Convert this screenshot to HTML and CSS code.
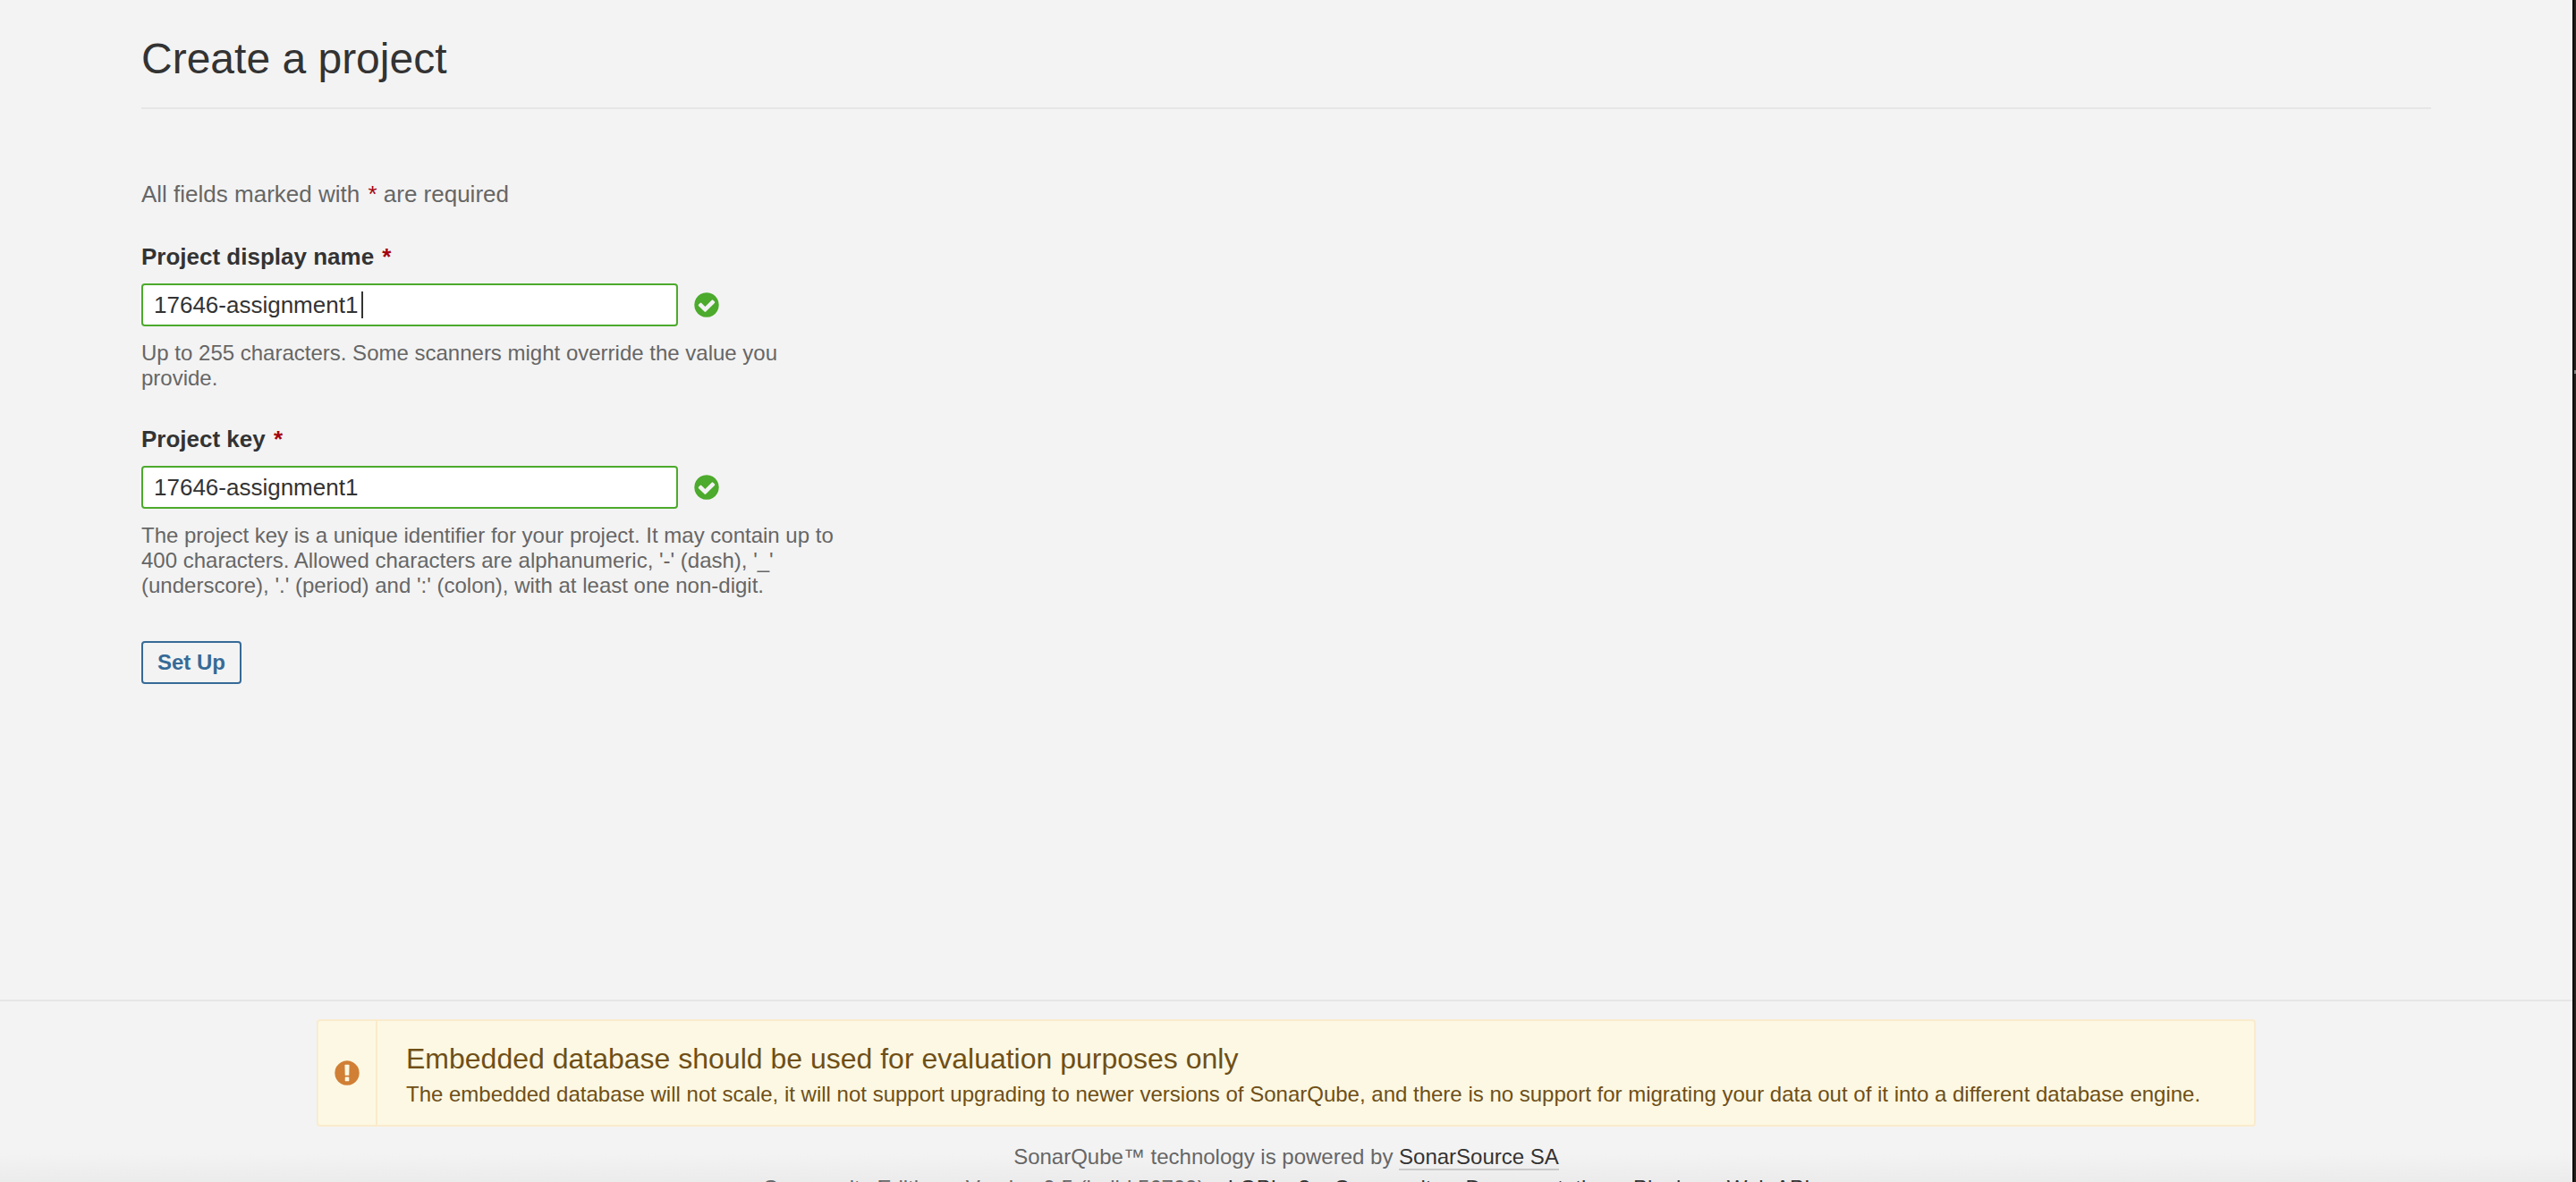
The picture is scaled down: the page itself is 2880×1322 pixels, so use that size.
FILE: index.html
```html
<!DOCTYPE html>
<html lang="en">
<head>
<meta charset="utf-8">
<title>Create a project</title>
<link rel="stylesheet" href="styles.css">
</head>
<body>
<main class="page">
  <header class="page-header">
    <h1 class="page-title">Create a project</h1>
  </header>
  <form class="project-form">
    <p class="form-note">All fields marked with <em class="mandatory">*</em> are required</p>
    <div class="field">
      <label class="field-label" for="project-name">Project display name <em class="mandatory">*</em></label>
      <div class="field-row">
        <span class="input-wrap">
          <input class="text-input" id="project-name" type="text" value="17646-assignment1" required>
          <span class="caret"></span>
        </span>
        <svg class="icon" viewBox="0 0 16 16" aria-hidden="true"><path class="icon-success" d="M12.607 6.554q0-.25-.161-.411l-.813-.804q-.17-.17-.402-.17t-.402.17L7.187 8.973l-2.018-2.018q-.17-.17-.402-.17t-.402.17l-.813.804q-.161.161-.161.411 0 .241.161.402l3.232 3.232q.17.17.402.17.241 0 .411-.17l4.848-4.848q.161-.161.161-.402zM14.857 8q0 1.866-.92 3.442t-2.496 2.496-3.442.92-3.442-.92-2.496-2.496-.92-3.442.92-3.442 2.496-2.496 3.442-.92 3.442.92 2.496 2.496.92 3.442z"/></svg>
      </div>
      <p class="field-help">Up to 255 characters. Some scanners might override the value you provide.</p>
    </div>
    <div class="field">
      <label class="field-label" for="project-key">Project key <em class="mandatory">*</em></label>
      <div class="field-row">
        <span class="input-wrap">
          <input class="text-input" id="project-key" type="text" value="17646-assignment1" required>
        </span>
        <svg class="icon" viewBox="0 0 16 16" aria-hidden="true"><path class="icon-success" d="M12.607 6.554q0-.25-.161-.411l-.813-.804q-.17-.17-.402-.17t-.402.17L7.187 8.973l-2.018-2.018q-.17-.17-.402-.17t-.402.17l-.813.804q-.161.161-.161.411 0 .241.161.402l3.232 3.232q.17.17.402.17.241 0 .411-.17l4.848-4.848q.161-.161.161-.402zM14.857 8q0 1.866-.92 3.442t-2.496 2.496-3.442.92-3.442-.92-2.496-2.496-.92-3.442.92-3.442 2.496-2.496 3.442-.92 3.442.92 2.496 2.496.92 3.442z"/></svg>
      </div>
      <p class="field-help">The project key is a unique identifier for your project. It may contain up to 400 characters. Allowed characters are alphanumeric, '-' (dash), '_' (underscore), '.' (period) and ':' (colon), with at least one non-digit.</p>
    </div>
    <button class="button" type="submit">Set Up</button>
  </form>
</main>
<footer class="page-footer">
  <div class="alert" role="alert">
    <div class="alert-icon">
      <svg class="icon" viewBox="0 0 16 16" aria-hidden="true"><path class="icon-warning" d="M8 1.143q1.866 0 3.442.92t2.496 2.496.92 3.442-.92 3.442-2.496 2.496-3.442.92-3.442-.92-2.496-2.496-.92-3.442.92-3.442 2.496-2.496T8 1.143zm1.143 11.134v-1.696q0-.125-.08-.21t-.196-.085H7.153q-.116 0-.205.089t-.089.205v1.696q0 .116.089.205t.205.089h1.714q.116 0 .196-.085t.08-.21zm-.018-3.072l.161-5.545q0-.107-.089-.161-.089-.071-.214-.071H7.019q-.125 0-.214.071-.089.054-.089.161l.152 5.545q0 .089.089.156t.214.067h1.652q.125 0 .21-.067t.094-.156z"/></svg>
    </div>
    <div class="alert-body">
      <p class="alert-title">Embedded database should be used for evaluation purposes only</p>
      <p class="alert-text">The embedded database will not scale, it will not support upgrading to newer versions of SonarQube, and there is no support for migrating your data out of it into a different database engine.</p>
    </div>
  </div>
  <p class="footer-line">SonarQube™ technology is powered by <a class="footer-link" href="#">SonarSource SA</a></p>
  <ul class="footer-menu">
    <li>Community Edition</li>
    <li>Version 9.5 (build 56709)</li>
    <li><a class="footer-link" href="#">LGPL v3</a></li>
    <li><a class="footer-link" href="#">Community</a></li>
    <li><a class="footer-link" href="#">Documentation</a></li>
    <li><a class="footer-link" href="#">Plugins</a></li>
    <li><a class="footer-link" href="#">Web API</a></li>
  </ul>
</footer>
</body>
</html>
```

FILE: styles.css
```css
* {
  box-sizing: border-box;
}

html {
  background: linear-gradient(#8a8a8a, #8a8a8a) right 414px / 2px 4px no-repeat #26221c;
  scrollbar-width: none;
}

body {
  margin: 0 2px 0 0;
  border-right: 2px solid #000;
  background: #f3f3f3;
  color: #333;
  font-family: "Helvetica Neue", "Liberation Sans", Arial, sans-serif;
  font-size: 26px;
  line-height: 32px;
}

h1,
p,
ul {
  margin: 0;
}

.page {
  min-height: calc(100vh - 204px);
  padding: 42px 158px;
}

.page-header {
  padding-bottom: 30px;
  border-bottom: 2px solid #e6e6e6;
}

.page-title {
  font-size: 48px;
  font-weight: 400;
  line-height: 48px;
}

.project-form {
  max-width: 800px;
  padding-top: 79px;
}

.form-note {
  margin-bottom: 38px;
  color: #666;
}

.mandatory {
  margin-left: 2px;
  color: #a4030f;
  font-style: normal;
}

.field {
  margin-bottom: 38px;
}

.field-label {
  display: block;
  margin-bottom: 14px;
  font-weight: 700;
}

.field-row {
  display: flex;
  align-items: center;
  gap: 16px;
}

.input-wrap {
  position: relative;
  display: flex;
  width: 600px;
}

.text-input {
  width: 100%;
  height: 48px;
  padding: 0 12px;
  border: 2px solid #4caa2c;
  border-radius: 4px;
  outline: none;
  background: #fff;
  color: #333;
  font: inherit;
}

.caret {
  position: absolute;
  top: 9px;
  left: 246px;
  width: 2px;
  height: 30px;
  background: #333;
}

.icon {
  width: 32px;
  height: 32px;
}

.icon-success {
  fill: #4caa2c;
}

.icon-warning {
  fill: #d07f35;
}

.field-help {
  padding-top: 16px;
  color: #666;
  font-size: 24px;
  line-height: 28px;
}

.button {
  height: 48px;
  margin-top: 10px;
  padding: 0 16px;
  border: 2px solid #366a97;
  border-radius: 4px;
  background: transparent;
  color: #366a97;
  font: inherit;
  font-size: 24px;
  font-weight: 700;
}

.page-footer {
  display: flex;
  flex-direction: column;
  align-items: center;
  padding-top: 20px;
  border-top: 2px solid #e6e6e6;
  background: linear-gradient(#f3f3f3 170px, #ebebeb 204px);
  color: #666;
  font-size: 24px;
}

.alert {
  display: flex;
  width: 100%;
  max-width: 2168px;
  border: 2px solid #faebcc;
  border-radius: 4px;
  background: #fcf8e3;
  color: #6f4f17;
}

.alert-icon {
  display: flex;
  align-items: center;
  justify-content: center;
  width: 66px;
  border-right: 2px solid #faebcc;
}

.alert-body {
  flex: 1;
  padding: 24px 32px 18px;
}

.alert-title {
  margin-bottom: 6px;
  font-size: 32px;
  line-height: 36px;
}

.footer-line {
  margin-top: 18px;
}

.footer-link {
  border-bottom: 2px solid #cacaca;
  color: #333;
  text-decoration: none;
}

.footer-menu {
  display: flex;
  margin-top: 3px;
  padding: 0;
  list-style: none;
}

.footer-menu li + li::before {
  content: "-";
  padding: 0 9px;
  color: #666;
}
```
